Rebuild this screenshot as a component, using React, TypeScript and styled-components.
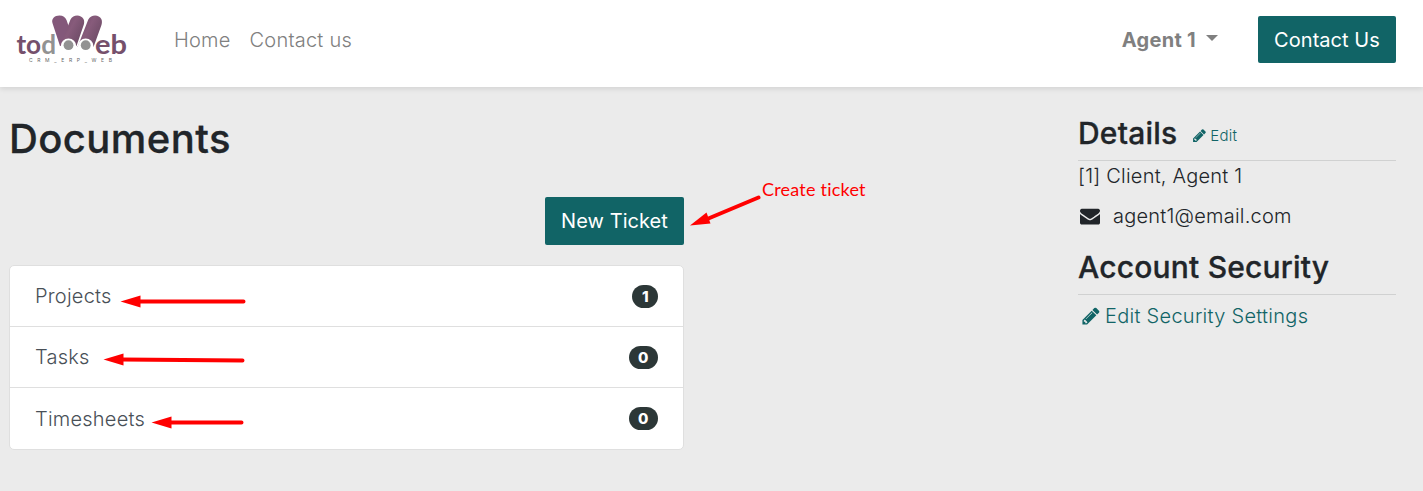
import React from "react";
import styled, { createGlobalStyle } from "styled-components";

const GlobalStyle = createGlobalStyle`
  *, *::before, *::after { box-sizing: border-box; }
  body {
    margin: 0;
    background: #ebebeb;
    color: #212529;
    font-family: Inter, "Liberation Sans", sans-serif;
    font-size: 20px;
    font-weight: 300;
    letter-spacing: 0.22px;
    line-height: 30px;
    overflow: hidden;
  }
  a { color: inherit; text-decoration: none; }
`;

const Page = styled.div`
  position: relative;
  width: 1423px;
  height: 491px;
  overflow: hidden;
`;

const Header = styled.header`
  display: flex;
  align-items: center;
  height: 87px;
  padding: 0 27px 8px 0;
  background: #fff;
  box-shadow: 0 2px 5px rgba(0, 0, 0, 0.1);
`;

const Logo = styled.svg`
  display: block;
  flex: none;
  width: 140px;
  height: 79px;
  letter-spacing: 0;
`;

const Nav = styled.nav`
  display: flex;
  gap: 19px;
  margin-left: 34px;
  color: #808080;
`;

const UserMenu = styled.a`
  display: flex;
  align-items: center;
  margin-left: auto;
  margin-right: 40px;
  color: #808080;
  font-weight: 700;
  letter-spacing: 0.3px;
`;

const Caret = styled.span`
  margin: -3px 0 0 10px;
  border: 6px solid transparent;
  border-top-color: #808080;
  border-bottom: 0;
`;

const Button = styled.a<{ $width: number; $height: number }>`
  display: flex;
  align-items: center;
  justify-content: center;
  width: ${(p) => p.$width}px;
  height: ${(p) => p.$height}px;
  border-radius: 2px;
  background: #116466;
  color: #fff;
  font-weight: 400;
  letter-spacing: 0.05px;
  white-space: nowrap;
`;

const Main = styled.main`
  display: flex;
  justify-content: space-between;
  padding: 27px 27px 0 9px;
`;

const Documents = styled.section`
  width: 675px;
`;

const Title = styled.h1`
  margin: 0;
  font-size: 40px;
  font-weight: 500;
  letter-spacing: 0.42px;
  line-height: 50px;
  -webkit-text-stroke: 0.3px currentColor;
`;

const Actions = styled.div`
  display: flex;
  justify-content: flex-end;
  margin: 33px 0 20px;
`;

const List = styled.div`
  border: 1px solid #dfdfdf;
  border-radius: 5px;
  background: #fff;
`;

const Row = styled.a<{ $height: number }>`
  display: flex;
  align-items: center;
  justify-content: space-between;
  height: ${(p) => p.$height}px;
  padding: 0 25px;
  color: #495057;
  & + & { border-top: 1px solid #dfdfdf; }
`;

const Badge = styled.span`
  padding: 4px 9.5px;
  border-radius: 12px;
  background: #2c3737;
  color: #fff;
  font-size: 15px;
  font-weight: 800;
  letter-spacing: 0;
  line-height: 15px;
`;

const Sidebar = styled.aside`
  width: 318px;
`;

const SideHeading = styled.div`
  display: flex;
  align-items: baseline;
  height: 47px;
  border-bottom: 1px solid #d0d1d1;
`;

const SideTitle = styled.h3`
  margin: 0;
  font-size: 30px;
  font-weight: 500;
  letter-spacing: 0.2px;
  line-height: 38px;
  -webkit-text-stroke: 0.3px currentColor;
`;

const EditLink = styled.a`
  display: flex;
  align-items: center;
  gap: 3px;
  position: relative;
  top: -1px;
  margin-left: 15px;
  color: #116466;
  font-size: 15px;
`;

const Contact = styled.div`
  height: 87px;
`;

const Email = styled.div`
  display: flex;
  align-items: center;
  gap: 13px;
  margin: 10px 0 0 2px;
`;

const SecurityLink = styled.a`
  display: flex;
  align-items: center;
  gap: 4px;
  margin: 6px 0 0 3px;
  color: #116466;
  letter-spacing: 0.28px;
`;

const Annotations = styled.svg`
  position: absolute;
  inset: 0;
  pointer-events: none;
`;

const Note = styled.span`
  position: absolute;
  left: 762px;
  top: 174px;
  color: #f00;
  font: 400 18px/30px Lato, sans-serif;
  letter-spacing: 0.22px;
  white-space: nowrap;
`;

const Pencil = ({ size }: { size: number }) => (
  <svg width={size} height={size} viewBox="0 0 1792 1792" fill="currentColor">
    <path d="M491 1536l91-91-235-235-91 91v107h128v128h107zm523-928q0-22-22-22-10 0-17 7l-542 542q-7 7-7 17 0 22 22 22 10 0 17-7l542-542q7-7 7-17zm-54-192l416 416-832 832h-416v-416zm683 96q0 53-37 90l-166 166-416-416 166-165q36-38 90-38 53 0 91 38l235 234q37 39 37 91z" />
  </svg>
);

const Envelope = () => (
  <svg width="20" height="20" viewBox="0 0 1792 1792" fill="currentColor">
    <path d="M1792 710v794q0 66-47 113t-113 47h-1472q-66 0-113-47t-47-113v-794q44 49 101 87 362 246 497 345 57 42 92.5 65.5t94.5 48 110 24.5h2q51 0 110-24.5t94.5-48 92.5-65.5q170-123 498-345 57-39 100-87zm0-294q0 79-49 151t-122 123q-376 261-468 325-10 7-42.5 31t-54 38.5-52 32.5-57.5 27-50 9h-2q-23 0-50-9t-57.5-27-52-32.5-54-38.5-42.5-31q-91-64-262-182.5t-205-142.5q-62-42-117-115.5t-55-136.5q0-78 41.5-130t118.5-52h1472q65 0 112.5 47t47.5 113z" />
  </svg>
);

const BrandLogo = () => (
  <Logo viewBox="0 0 140 79">
    <defs>
      <linearGradient id="bar" x1="0" y1="0" x2="1" y2="0.7">
        <stop offset="0" stopColor="#6f4a68" />
        <stop offset="0.5" stopColor="#875b7b" />
        <stop offset="1" stopColor="#6b4a64" />
      </linearGradient>
    </defs>
    <path d="M52.6 23.5C51 19 54.5 15.500 59.500 15.500C63 15.500 65.500 17.500 66.500 20L71 33L64 46H60Z" fill="#83587a" />
    <path d="M70.500 19.500C73 14.200 81 14.200 83.500 19C84.500 21 84.300 23.500 83.500 25.500L76.500 46H60Z" fill="url(#bar)" />
    <path d="M88.300 19.500C91 14.200 99 14.200 101.300 19C102.300 21 102 23.500 101.300 25.500L93.500 47H77.500Z" fill="url(#bar)" />
    <circle cx="68.500" cy="46.300" r="7.800" fill="#fff" />
    <circle cx="85.700" cy="46.300" r="7.800" fill="#fff" />
    <circle cx="68.500" cy="45.200" r="4.900" fill="#929292" />
    <circle cx="85.700" cy="45.200" r="4.900" fill="#929292" />
    <g fontFamily="Lato, sans-serif" fontSize="27" fontWeight="700">
      <text x="16.500" y="53.500" textLength="39.500" lengthAdjust="spacingAndGlyphs" fill="#75506c">
        to<tspan fill="#929292">d</tspan>
      </text>
      <text x="95" y="53.500" textLength="32" lengthAdjust="spacingAndGlyphs" fill="#75506c">eb</text>
    </g>
    <text x="29" y="62.300" textLength="83" fontFamily="Inter, sans-serif" fontSize="5" fontWeight="400" fill="#666">CRM_ERP_WEB</text>
  </Logo>
);

const documents = [
  { name: "Projects", count: 1, height: 60 },
  { name: "Tasks", count: 0, height: 61 },
  { name: "Timesheets", count: 0, height: 62 },
];

export default function App() {
  return (
    <>
      <GlobalStyle />
      <Page>
        <Header>
          <BrandLogo />
          <Nav>
            <a href="#home">Home</a>
            <a href="#contact">Contact us</a>
          </Nav>
          <UserMenu href="#account">
            Agent 1<Caret />
          </UserMenu>
          <Button href="#contact" $width={138} $height={47}>Contact Us</Button>
        </Header>
        <Main>
          <Documents>
            <Title>Documents</Title>
            <Actions>
              <Button href="#new" $width={139} $height={48}>New Ticket</Button>
            </Actions>
            <List>
              {documents.map((d) => (
                <Row key={d.name} href="#list" $height={d.height}>
                  {d.name}
                  <Badge>{d.count}</Badge>
                </Row>
              ))}
            </List>
          </Documents>
          <Sidebar>
            <SideHeading>
              <SideTitle>Details</SideTitle>
              <EditLink href="#edit">
                <Pencil size={15} />
                Edit
              </EditLink>
            </SideHeading>
            <Contact>
              <div>[1] Client, Agent 1</div>
              <Email>
                <Envelope />
                agent1@email.com
              </Email>
            </Contact>
            <SideHeading>
              <SideTitle>Account Security</SideTitle>
            </SideHeading>
            <SecurityLink href="#security">
              <Pencil size={20} />
              Edit Security Settings
            </SecurityLink>
          </Sidebar>
        </Main>
        <Annotations width="1423" height="491">
          <g stroke="#f00" strokeWidth="4" strokeLinecap="round">
            <path d="M758.500 197.500L706 219.500M243.500 301.500H138M242.500 360.500L122 359.500M241.500 422.500H170" />
          </g>
          <g fill="#f00">
            <path d="M690 225.500L706.500 212.500L710.500 223.500Z" />
            <path d="M120.500 301.500L140.500 295.500V307.500Z" />
            <path d="M103.500 359.500L123.500 353.500V365.500Z" />
            <path d="M151.500 422.500L171.500 416.500V428.500Z" />
          </g>
        </Annotations>
        <Note>Create ticket</Note>
      </Page>
    </>
  );
}
